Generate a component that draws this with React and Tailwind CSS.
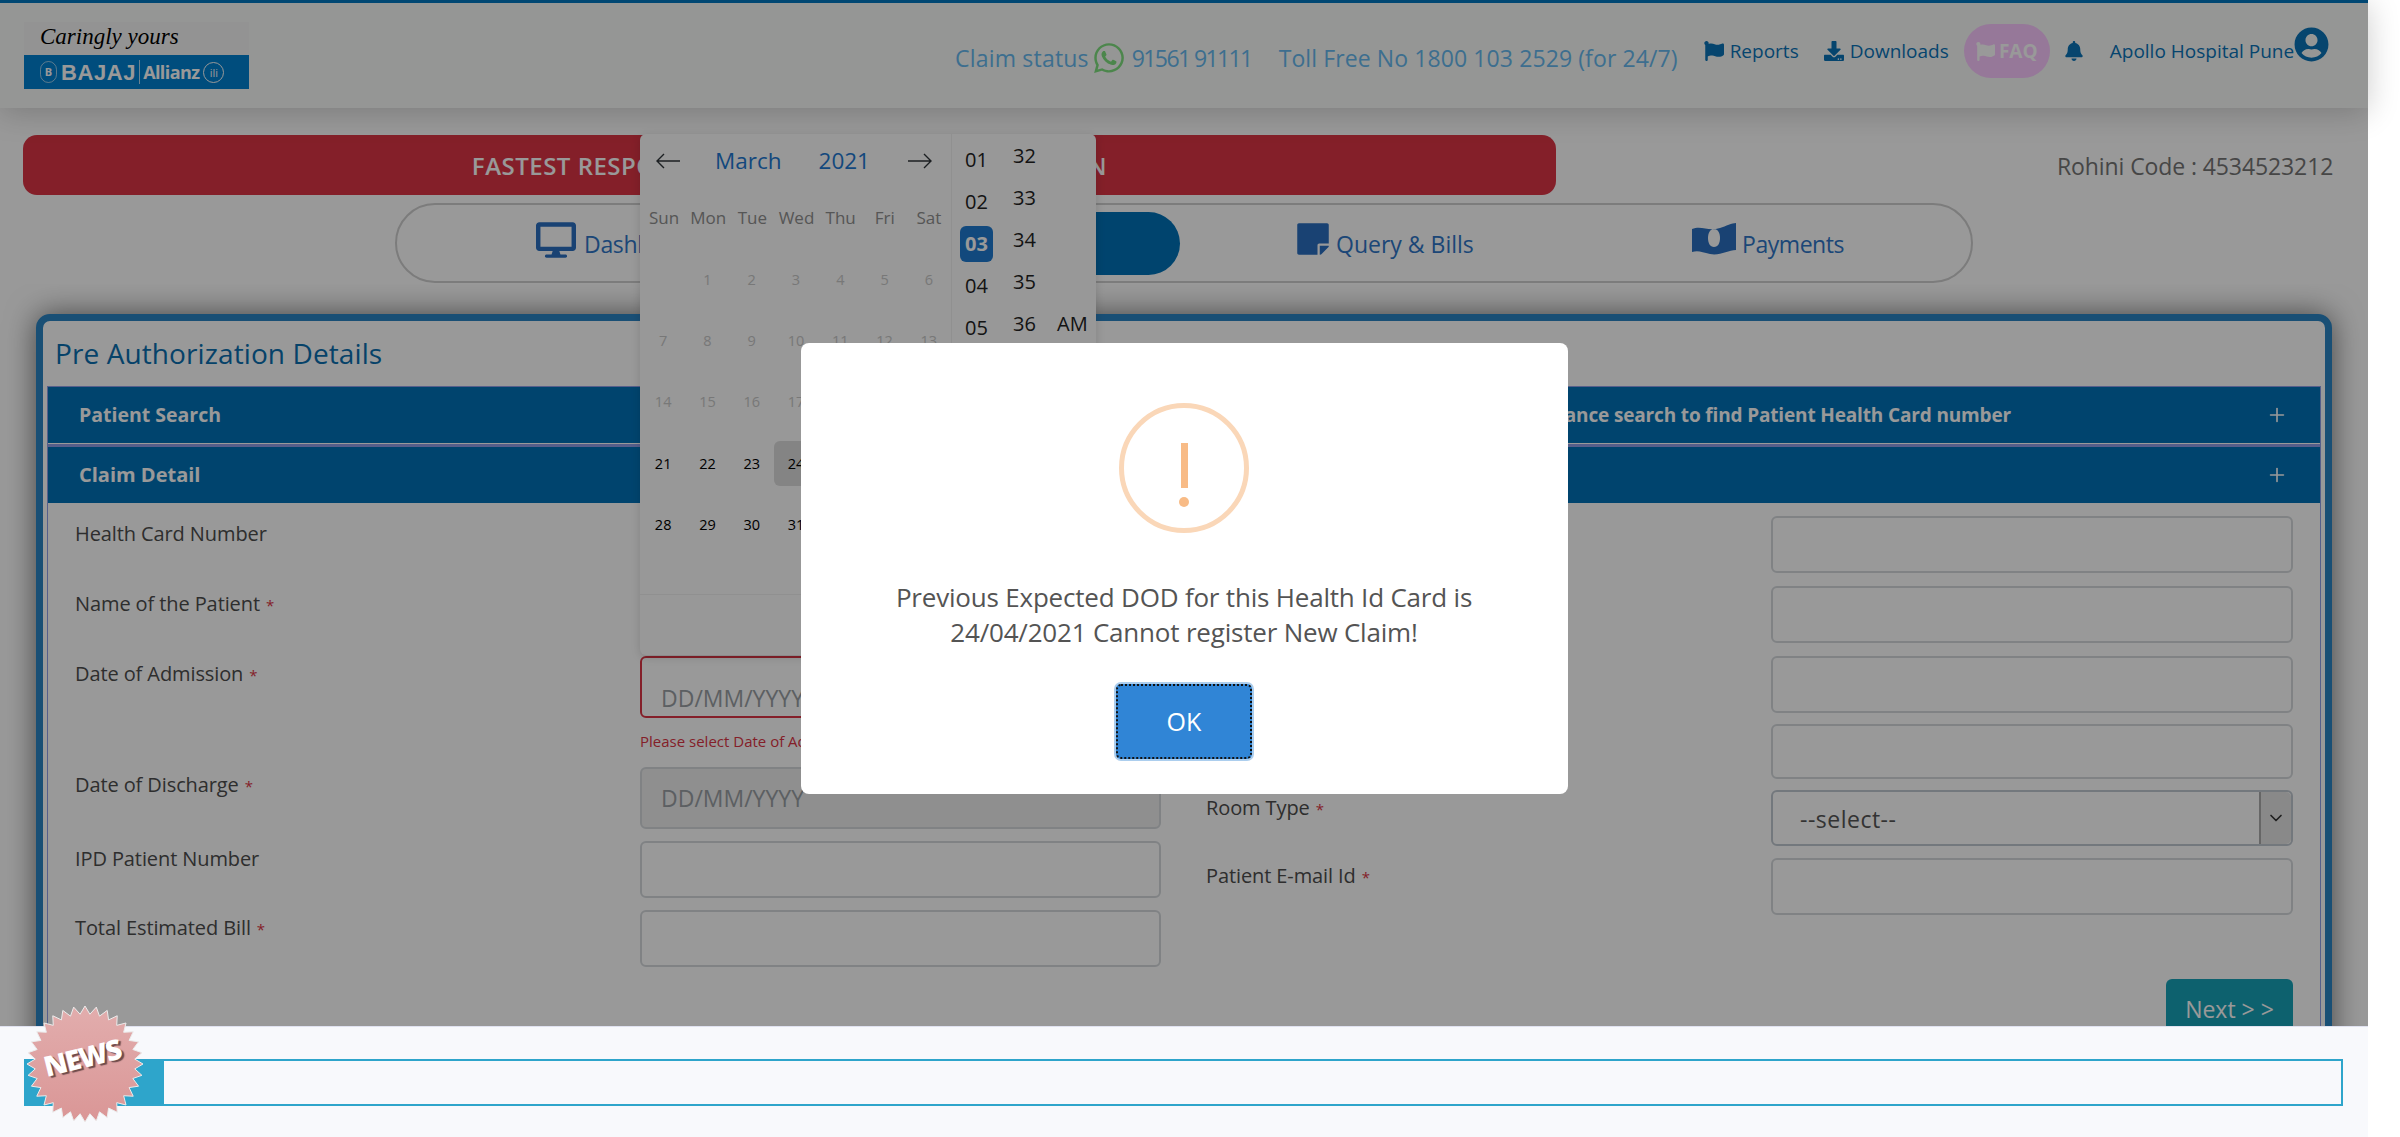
import React from 'react';
import { FaBell, FaDesktop, FaDownload, FaFlag, FaStickyNote, FaUserCircle, FaWhatsapp } from 'react-icons/fa';
import { ChevronDown, Plus } from 'lucide-react';

const font = { fontFamily: '"Open Sans", sans-serif' };

// points of the news badge
const burst = Array.from({ length: 64 }, (_, i) => {
    const r = i % 2 === 0 ? 58 : 50;
    const a = (i * Math.PI) / 32;
    return `${60 + r * Math.sin(a)},${60 - r * Math.cos(a)}`;
}).join(' ');

const weekDays = ['Sun', 'Mon', 'Tue', 'Wed', 'Thu', 'Fri', 'Sat'];
const days = [
    ['', '1', '2', '3', '4', '5', '6'],
    ['7', '8', '9', '10', '11', '12', '13'],
    ['14', '15', '16', '17', '18', '19', '20'],
    ['21', '22', '23', '24', '25', '26', '27'],
    ['28', '29', '30', '31', '', '', ''],
];

function Field({ label, required, className, children }) {
    return (
        <div className={`flex ${className}`}>
            <div className="w-[565px] pt-[3px] text-[20px] leading-[30px] tracking-[-0.1px] text-[#4d4d4d] shrink-0">
                {label}
                {required && <span className="ml-[6px] text-[15px] text-[#dc3545]">*</span>}
            </div>
            <div className="flex-1">{children}</div>
        </div>
    );
}

function Input({ className = 'h-[57px] border-[#d5d9dd] bg-white', placeholder }) {
    return (
        <div className={`w-full rounded-[6px] border-2 pl-[19px] flex items-center text-[23px] text-[#9a9fa4] ${className}`}>
            {placeholder}
        </div>
    );
}

function Calendar() {
    return (
        <div className="absolute left-[640px] top-[134px] w-[456px] h-[521px] flex rounded-[6px] bg-[#fdfdfd] shadow-[0_2px_10px_rgba(0,0,0,0.15)] z-[5]">
            <div className="w-[312px] border-r border-[#f0f0f0] flex flex-col">
                <div className="h-[54px] flex items-center px-4 text-[#30353a]">
                    <svg width="24" height="16" viewBox="0 0 24 16" fill="none" stroke="currentColor" strokeWidth="1.4"><path d="M24 8H1M8 1L1 8l7 7" /></svg>
                    <span className="ml-[35px] text-[22.5px] text-[#1f78d1]">March</span>
                    <span className="ml-[37px] text-[22.5px] text-[#1f78d1]">2021</span>
                    <svg className="ml-[38px]" width="24" height="16" viewBox="0 0 24 16" fill="none" stroke="currentColor" strokeWidth="1.4"><path d="M0 8h23M16 1l7 7-7 7" /></svg>
                </div>
                <div className="mt-[18px] grid grid-cols-7 pl-[2px] text-center text-[17px] leading-[24px] text-[#8f8f8f]">
                    {weekDays.map((d) => <span key={d}>{d}</span>)}
                </div>
                <div className="mt-[19px] grid grid-cols-7 auto-rows-[61.3px] pl-[1px] text-center text-[14.5px]">
                    {days.flat().map((d, i) => (
                        <div key={i} className="flex items-center justify-center">
                            <span className={`w-[44px] h-[45px] flex items-center justify-center rounded-[6px] ${i >= 21 && d ? 'text-black' : 'text-[#c8c8c8]'} ${d === '24' ? 'bg-[#dcdcdc]' : ''}`}>{d}</span>
                        </div>
                    ))}
                </div>
                <div className="mt-[39px] border-t border-[#f0f0f0] flex-1" />
            </div>
            <div className="flex-1 relative text-[20px] text-[#222]">
                <div className="absolute left-[8px] top-[2px] w-[33px] flex flex-col items-center">
                    {['01', '02', '03', '04', '05'].map((h) => (
                        <span key={h} className={`w-[33px] h-[36px] mt-[6px] flex items-center justify-center rounded-[6px] ${h === '03' ? 'bg-[#1f7ad0] font-bold text-white' : ''}`}>{h}</span>
                    ))}
                </div>
                <div className="absolute left-[56px] -top-[2px] w-[33px] flex flex-col items-center">
                    {['32', '33', '34', '35', '36'].map((m) => (
                        <span key={m} className="h-[36px] mt-[6px] flex items-center">{m}</span>
                    ))}
                </div>
                <span className="absolute left-[105px] top-[172px] leading-[36px]">AM</span>
            </div>
        </div>
    );
}

export default function App() {
    return (
        <div className="relative h-[1137px] w-full overflow-hidden bg-white" style={font}>
            <div className="relative w-[2368px] h-[1137px]">
                {/* Header */}
                <div className="relative z-[3] h-[108px] border-t-[3px] border-[#0077c0] bg-[#f8fbf8] shadow-[0_4px_30px_rgba(0,0,0,0.2)] flex text-[#0a73b8]">
                    <div className="ml-[24px] mt-[19px] w-[225px] h-[67px] flex flex-col bg-[#f6f6f6]">
                        <div className="h-[33px] pl-4 text-[23px] leading-[30px] italic text-black whitespace-nowrap" style={{ fontFamily: '"Liberation Serif", serif' }}>Caringly yours</div>
                        <div className="flex-1 bg-[#0080d0] flex items-center pl-4 text-white">
                            <span className="w-[17px] h-[22px] rounded-full border border-white/60 text-[11px] leading-[20px] text-center font-bold">B</span>
                            <span className="ml-[4px] text-[22px] font-extrabold tracking-[0.6px]" style={{ fontFamily: '"Liberation Sans", sans-serif' }}>BAJAJ</span>
                            <span className="mx-[3px] h-[24px] w-px bg-white/70" />
                            <span className="text-[18px] font-bold tracking-[-0.6px]">Allianz</span>
                            <span className="ml-[4px] w-[21px] h-[21px] rounded-full border border-white text-[11px] leading-[19px] text-center">ili</span>
                        </div>
                    </div>
                    <div className="ml-[706px] mt-[35px] h-[40px] flex items-center text-[23px] text-[#66b8ee] whitespace-nowrap">
                        <span className="tracking-[0.2px]">Claim status</span>
                        <FaWhatsapp className="ml-[3px] text-[#7fe07f]" size={34} />
                        <span className="ml-[6px] tracking-[-1.6px]">91561 91111</span>
                        <span className="ml-[27px] tracking-[0.1px]">Toll Free No 1800 103 2529 (for 24/7)</span>
                    </div>
                    <div className="ml-[26px] mt-[21px] h-[54px] flex items-center text-[19px] whitespace-nowrap">
                        <FaFlag size={20} />
                        <span className="ml-[6px]">Reports</span>
                        <FaDownload className="ml-[25px]" size={20} />
                        <span className="ml-[6px]">Downloads</span>
                        <div className="ml-[15px] w-[86px] h-[54px] rounded-[27px] bg-[#fac8ff] flex items-center justify-center text-white font-bold">
                            <FaFlag size={19} />
                            <span className="ml-[4px]">FAQ</span>
                        </div>
                        <FaBell className="ml-[14px]" size={20} />
                        <span className="ml-[26px]">Apollo Hospital Pune</span>
                        <FaUserCircle className="-mt-[14px]" size={35} />
                    </div>
                </div>

                {/* Banner and tabs */}
                <div className="relative z-[2] h-[176px] bg-white">
                    <div className="flex items-center pt-[27px] pl-[23px]">
                        <div className="w-[1533px] h-[60px] pt-[2px] rounded-[14px] bg-[#dc3545] flex items-center justify-center text-[24px] font-semibold tracking-[0.5px] text-white whitespace-nowrap">
                            FASTEST RESPONSE WITH CASHLESS AUTHORIZATION
                        </div>
                        <div className="ml-[501px] mt-[2px] text-[23px] text-[#757575] tracking-[-0.1px] whitespace-nowrap">Rohini Code : 4534523212</div>
                    </div>
                    <div className="ml-[395px] mt-[8px] w-[1578px] h-[80px] rounded-full border-2 border-[#cfcfcf] flex items-center text-[23px] text-[#2f76c7]">
                        <div className="w-[394px] pl-[139px] flex items-center">
                            <FaDesktop className="-mt-[6px] text-[#2a6fc0]" size={40} />
                            <span className="ml-[8px] mt-[3px] tracking-[-0.3px]">Dashboard</span>
                        </div>
                        <div className="w-[389px] h-[63px] rounded-full bg-[#0072b8]" />
                        <div className="w-[397px] pl-[115px] flex items-center">
                            <FaStickyNote className="-mt-[8px] text-[#2a6fc0]" size={36} />
                            <span className="ml-[5px] mt-[3px]">Query &amp; Bills</span>
                        </div>
                        <div className="pl-[115px] flex items-center">
                            <svg className="-mt-[8px] text-[#2a6fc0]" width="44" height="34" viewBox="0 0 44 34" fill="currentColor" fillRule="evenodd">
                                <path d="M0 7C10 3 16 10 28 6C34 4 40 1 44 1V28C36 28 28 34 18 32C10 30 6 28 0 30ZM22 7C18 7 16 11 16 16S18 25 22 25S28 21 28 16S26 7 22 7Z" />
                            </svg>
                            <span className="ml-[6px] mt-[3px] tracking-[-0.45px]">Payments</span>
                        </div>
                    </div>
                </div>

                {/* Pre authorization card */}
                <div className="ml-[36px] mt-[30px] w-[2296px] h-[800px] rounded-[14px] border-[7px] border-[#2b84c4] bg-white shadow-[0_0_30px_rgba(0,0,0,0.55)] px-[4px]">
                    <div className="h-[63px] mb-[2px] pl-[8px] flex items-center text-[28px] tracking-[0.1px] text-[#0a6fb0]">Pre Authorization Details</div>
                    <div className="border border-[#8f9ee8]">
                        <div className="h-[56px] flex items-center justify-between pl-[31px] pr-[32px] bg-[#0072b8] text-white text-[19.5px] font-bold">
                            <span>Patient Search</span>
                            <span className="flex items-center">
                                <span className="text-[19px] tracking-[-0.15px]">Use advance search to find Patient Health Card number</span>
                                <Plus className="ml-[255px]" size={22} strokeWidth={1.8} />
                            </span>
                        </div>
                        <div className="h-[3px] bg-[#8f9ee8] mt-[1px]" />
                        <div className="h-[56px] flex items-center justify-between pl-[31px] pr-[32px] bg-[#0072b8] text-white text-[20px] font-bold">
                            <span>Claim Detail</span>
                            <Plus size={22} strokeWidth={1.8} />
                        </div>
                        <div className="flex pt-[13px] pl-[27px] pr-[27px] h-[680px]">
                            {/* Left column */}
                            <div className="w-[1086px] shrink-0">
                                <Field label="Health Card Number" className="h-[70px]"><Input /></Field>
                                <Field label="Name of the Patient" required className="h-[70px]"><Input /></Field>
                                <Field label="Date of Admission" required className="h-[111px]">
                                    <Input className="h-[62px] pt-[22px] border-[#dc3545] bg-white" placeholder="DD/MM/YYYY" />
                                    <div className="mt-[13px] text-[15px] leading-[20px] text-[#dc3545]">Please select Date of Admission</div>
                                </Field>
                                <Field label="Date of Discharge" required className="h-[74px]">
                                    <Input className="h-[62px] border-[#d5d9dd] bg-[#eeeeee]" placeholder="DD/MM/YYYY" />
                                </Field>
                                <Field label="IPD Patient Number" className="h-[69px]"><Input /></Field>
                                <Field label="Total Estimated Bill" required><Input /></Field>
                            </div>
                            {/* Right column */}
                            <div className="ml-[45px] flex-1">
                                <Field className="h-[70px]"><Input /></Field>
                                <Field className="h-[70px]"><Input /></Field>
                                <Field className="h-[68px]"><Input /></Field>
                                <Field className="h-[66px]"><Input className="h-[55px] border-[#d5d9dd] bg-white" /></Field>
                                <Field label="Room Type" required className="h-[68px]">
                                    <div className="h-[56px] w-full rounded-[6px] border-2 border-[#c0c8d0] bg-white flex items-center justify-between pl-[27px] text-[23px] tracking-[0.5px] text-[#555]">
                                        <span className="pt-[3px]">--select--</span>
                                        <div className="w-[32px] h-full rounded-r-[5px] border-l-2 border-[#aaa] bg-[#e5e5e5] flex items-center justify-center text-[#333]">
                                            <ChevronDown size={20} />
                                        </div>
                                    </div>
                                </Field>
                                <Field label="Patient E-mail Id" required><Input /></Field>
                                <div className="mt-[64px] flex justify-end">
                                    <div className="w-[127px] h-[60px] rounded-[6px] bg-[#17a2b8] flex items-center justify-center text-[23px] text-white">Next &gt; &gt;</div>
                                </div>
                            </div>
                        </div>
                    </div>
                </div>

                <Calendar />

                {/* Dimmed backdrop with the alert */}
                <div className="absolute inset-0 z-10 bg-black/40 flex items-center justify-center">
                    <div className="w-[767px] h-[451px] rounded-[8px] bg-white flex flex-col items-center">
                        <div className="mt-[60px] w-[130px] h-[130px] rounded-full border-[5px] border-[#fad7b8] flex flex-col items-center">
                            <div className="mt-[35px] w-[7px] h-[45px] bg-[#f8bb86]" />
                            <div className="mt-[9px] w-[10px] h-[10px] rounded-full bg-[#f8bb86]" />
                        </div>
                        <div className="mt-[47px] text-center text-[26px] leading-[35px] text-[#545454] tracking-[-0.2px]">
                            Previous Expected DOD for this Health Id Card is<br />24/04/2021 Cannot register New Claim!
                        </div>
                        <div className="mt-[32px] w-[140px] h-[79px] rounded-[7px] bg-[#acceee] p-[2px]">
                            <div className="w-full h-full rounded-[5px] border-2 border-dotted border-[#111] bg-[#3085d6] flex items-center justify-center text-[25px] text-white">OK</div>
                        </div>
                    </div>
                </div>

                {/* News ticker */}
                <div className="absolute left-0 right-0 bottom-0 z-20 h-[111px] border-t border-[#e0e2f0] bg-[#f8f9fc] pt-[32px] pl-[24px] pr-[25px]">
                    <div className="h-[47px] flex border-2 border-[#2ea5cb] border-l-0">
                        <div className="w-[140px] bg-[#2ea5cb]" />
                    </div>
                    <div className="absolute left-[25px] -top-[23px] w-[120px] h-[120px]">
                        <svg viewBox="0 0 120 120" className="w-full h-full">
                            <defs>
                                <linearGradient id="news-badge" x1="0" y1="0" x2="0" y2="1">
                                    <stop offset="0" stopColor="#e2adad" />
                                    <stop offset="1" stopColor="#da9696" />
                                </linearGradient>
                            </defs>
                            <polygon points={burst} fill="url(#news-badge)" stroke="#ececec" strokeWidth="1" />
                        </svg>
                        <span className="absolute left-[18px] top-[37px] -rotate-[14deg] text-[28px] leading-[32px] font-extrabold text-white tracking-[-1.5px] [text-shadow:2px_2px_1px_#6d4a4a]">NEWS</span>
                    </div>
                </div>
            </div>
        </div>
    );
}
